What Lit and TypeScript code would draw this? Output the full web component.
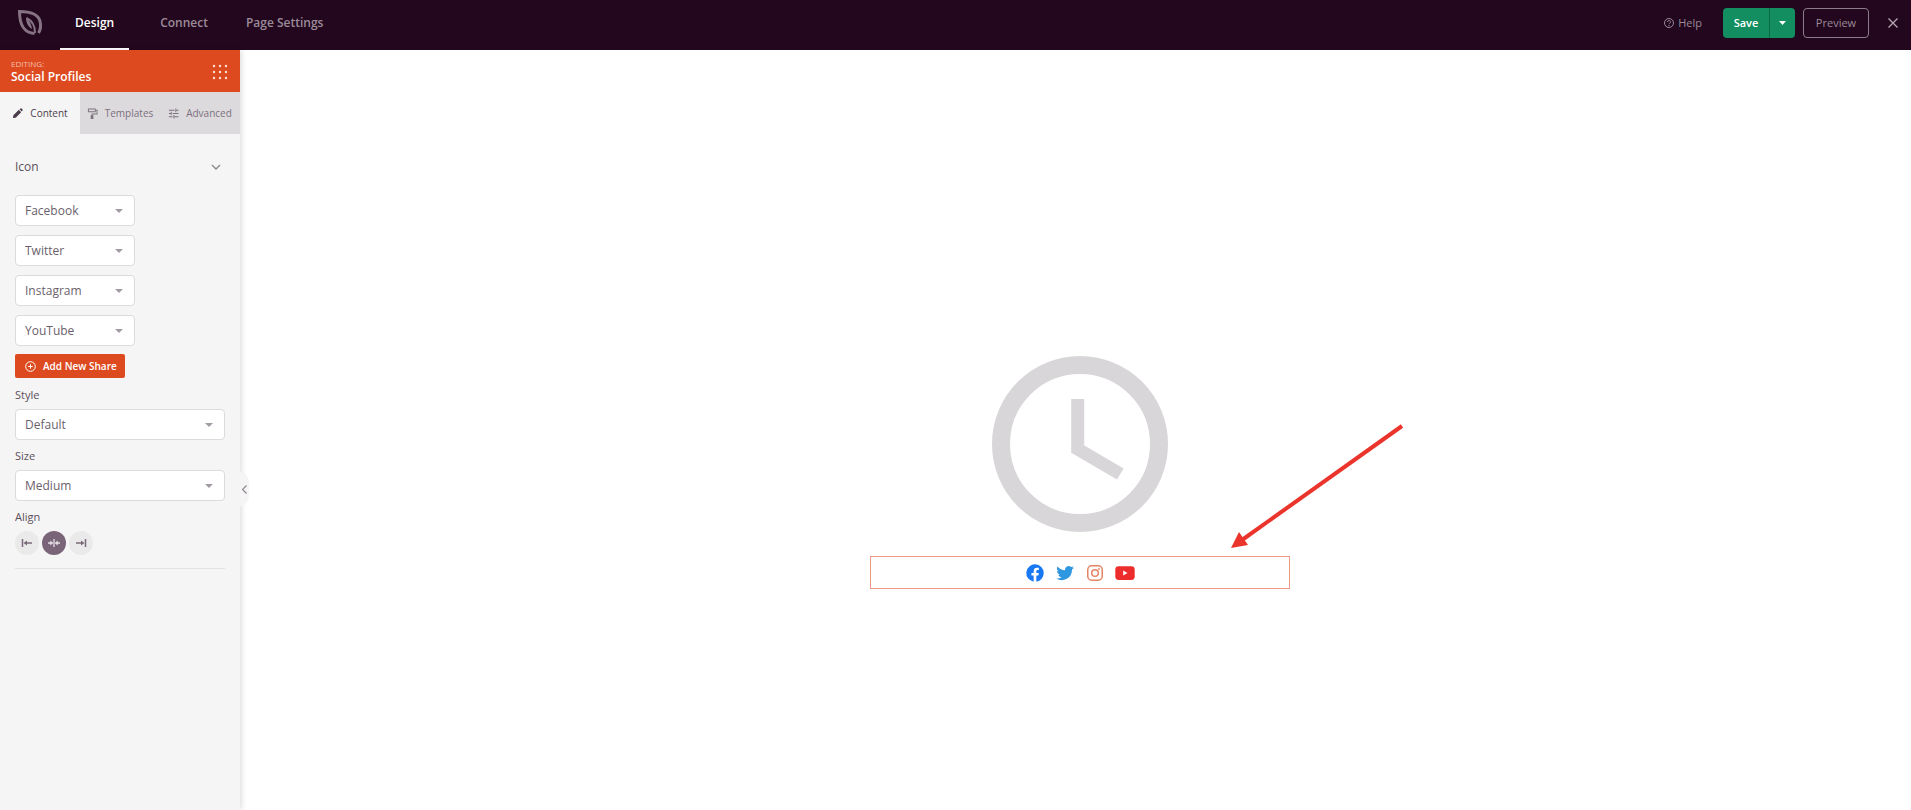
import { LitElement, html, css, svg } from "lit";
import { customElement, property, state } from "lit/decorators.js";

@customElement("picker-field")
class PickerField extends LitElement {
  @property() label = "";
  @property() value = "";
  @property({ type: Array }) options: string[] = [];
  @property({ type: Boolean, attribute: "hide-label" }) hideLabel = false;

  static styles = css`
    :host {
      display: block;
    }
    .label {
      display: block;
      font-size: 11px;
      line-height: 16px;
      margin-bottom: 6px;
      color: #5c4f5b;
    }
    .box {
      display: grid;
      align-items: center;
    }
    .select {
      grid-area: 1 / 1;
      appearance: none;
      width: 100%;
      height: 31px;
      margin: 0;
      padding: 0 28px 0 9px;
      border: 1px solid #dcdadc;
      border-radius: 4px;
      background: #fff;
      color: #6b5f6c;
      font: 12px "Open Sans", sans-serif;
    }
    .caret {
      grid-area: 1 / 1;
      justify-self: end;
      margin-right: 12px;
      width: 8px;
      height: 4px;
      fill: #a39ca5;
      pointer-events: none;
    }
  `;

  render() {
    return html`
      ${this.hideLabel ? "" : html`<label class="label" for="field">${this.label}</label>`}
      <div class="box">
        <select class="select" id="field" aria-label=${this.label}>
          ${this.options.map((o) => html`<option ?selected=${o === this.value}>${o}</option>`)}
        </select>
        <svg class="caret" viewBox="0 0 8 4" aria-hidden="true"><path d="M0 0h8L4 4z" /></svg>
      </div>
    `;
  }
}

const NETWORKS = ["Facebook", "Twitter", "Instagram", "YouTube"];

const alignIcons: Record<string, unknown> = {
  Left: svg`<path d="M1.500 1v8" stroke-width="1.500" /><path d="M5 5h6" stroke-width="1.500" /><path d="M2.500 5L6 2.500v5z" fill="currentColor" stroke="none" />`,
  Center: svg`<path d="M6 1v8M0 5h3M9 5h3" stroke-width="1.300" /><path d="M5.300 5L2.300 2.500v5zM6.700 5l3-2.500v5z" fill="currentColor" stroke="none" />`,
  Right: svg`<path d="M10.500 1v8" stroke-width="1.500" /><path d="M1 5h6" stroke-width="1.500" /><path d="M9.500 5L6 2.500v5z" fill="currentColor" stroke="none" />`,
};

@customElement("app-root")
class AppRoot extends LitElement {
  @state() private align = "Center";

  static styles = css`
    :host {
      display: flex;
      flex-direction: column;
      min-height: 100vh;
      background: #fff;
      font-family: "Open Sans", sans-serif;
      font-size: 12px;
      line-height: 16px;
      color: #5c4f5b;
    }
    * {
      box-sizing: border-box;
    }
    button {
      margin: 0;
      padding: 0;
      border: 0;
      background: none;
      font: inherit;
      color: inherit;
      cursor: pointer;
    }
    .topbar {
      display: flex;
      align-items: center;
      height: 50px;
      padding: 0 12px 0 16px;
      background: #23071e;
      color: #9b8b99;
    }
    .logo {
      display: block;
      width: 28px;
      height: 28px;
      margin-bottom: 4px;
    }
    .nav {
      display: flex;
      gap: 8px;
      align-self: stretch;
      margin-left: 16px;
    }
    .nav-link {
      display: flex;
      align-items: center;
      padding: 0 15px 2px;
      border-bottom: 2px solid transparent;
      color: inherit;
      font-weight: 600;
      text-decoration: none;
    }
    .nav-link.current {
      margin-right: 8px;
      border-color: #fff;
      color: #fff;
    }
    .actions {
      display: flex;
      align-items: center;
      margin: 0 0 4px auto;
      font-size: 11px;
    }
    .help {
      display: flex;
      align-items: center;
      gap: 4px;
      margin-right: 21px;
      color: inherit;
      text-decoration: none;
    }
    .help-icon {
      width: 10px;
      height: 10px;
    }
    .split {
      display: flex;
      height: 30px;
      margin-right: 8px;
      border-radius: 4px;
      background: #138e60;
      color: #fff;
    }
    .save {
      width: 47px;
      border-right: 1px solid #0b6b47;
      font-weight: 600;
    }
    .save-more {
      display: grid;
      place-items: center;
      width: 25px;
    }
    .save-caret {
      width: 7px;
      height: 4px;
      fill: #fff;
    }
    .preview {
      width: 66px;
      height: 30px;
      border: 1px solid #8a7c88;
      border-radius: 4px;
      font-weight: 500;
    }
    .close {
      display: grid;
      place-items: center;
      width: 12px;
      margin-left: 18px;
    }
    .close-icon {
      width: 10px;
      height: 10px;
      stroke: #b5a9b4;
    }
    .workspace {
      display: flex;
      flex: 1;
    }
    .sidebar {
      position: relative;
      flex: none;
      width: 240px;
      background: #f5f5f5;
      box-shadow: 2px 0 5px rgba(0, 0, 0, 0.12);
    }
    .editing {
      display: flex;
      align-items: center;
      justify-content: space-between;
      height: 42px;
      padding: 1px 12px 0 11px;
      background: #dd4a1f;
      color: #fff;
    }
    .eyebrow {
      font-size: 8px;
      line-height: 10px;
      text-transform: uppercase;
      color: #f6bfae;
    }
    .block-name {
      margin: 0;
      font-size: 12px;
      line-height: 16px;
      font-weight: 600;
    }
    .grid-icon {
      display: block;
      width: 16px;
      height: 16px;
      fill: #fbe0d8;
    }
    .tabs {
      display: grid;
      grid-template-columns: repeat(3, 1fr);
      height: 42px;
      background: #dcdadd;
      font-size: 10px;
      font-weight: 500;
      color: #7d717f;
    }
    .tab {
      display: flex;
      align-items: center;
      justify-content: center;
      gap: 7px;
    }
    .tab.current {
      background: #f5f5f5;
      color: #4c3d4c;
    }
    .tab-icon {
      width: 11px;
      height: 11px;
      fill: currentColor;
    }
    .panel {
      padding: 25px 15px;
    }
    .section {
      display: flex;
      align-items: center;
      justify-content: space-between;
      width: 100%;
      padding-right: 4px;
      font-weight: 500;
    }
    .chevron {
      width: 10px;
      height: 6px;
      stroke: #8e848e;
    }
    .networks {
      display: grid;
      gap: 9px;
      width: 120px;
      margin-top: 20px;
    }
    .add {
      display: flex;
      align-items: center;
      gap: 7px;
      height: 24px;
      margin: 8px 0 9px;
      padding: 0 8px 0 10px;
      border-radius: 2px;
      background: #dd4a1f;
      color: #fff;
      font-size: 10px;
      font-weight: 600;
    }
    .add-icon {
      width: 11px;
      height: 11px;
    }
    .fields {
      display: grid;
      gap: 8px;
    }
    .align-label {
      font-size: 11px;
      line-height: 16px;
    }
    .align {
      margin: 0;
      padding: 0 0 13px;
      border: 0;
      border-bottom: 1px solid #e4e2e4;
    }
    .align-row {
      display: flex;
      gap: 3px;
      margin-top: 6px;
    }
    .align-button {
      display: grid;
      place-items: center;
      width: 24px;
      height: 24px;
      border-radius: 50%;
      background: #ebeaeb;
      color: #7a6a79;
    }
    .align-button.current {
      background: #7a6478;
      color: #e6e0e6;
    }
    .align-icon {
      width: 12px;
      height: 10px;
      fill: none;
      stroke: currentColor;
    }
    .collapse {
      position: absolute;
      top: 421px;
      right: -9px;
      display: grid;
      place-items: center end;
      width: 24px;
      height: 36px;
      padding-right: 2px;
      border-radius: 0 12px 12px 0;
      background: #f5f5f5;
    }
    .collapse-icon {
      width: 5px;
      height: 9px;
      stroke: #8e848e;
    }
    .canvas {
      display: flex;
      flex: 1;
      align-items: center;
      justify-content: center;
      padding: 85px 0 0 9px;
    }
    .content {
      position: relative;
      display: flex;
      flex-direction: column;
      align-items: center;
      gap: 24px;
      width: 420px;
    }
    .clock {
      width: 176px;
      height: 176px;
      fill: none;
      stroke: #d8d6d8;
    }
    .profiles {
      display: flex;
      align-items: center;
      justify-content: center;
      gap: 10px;
      width: 100%;
      height: 33px;
      border: 1px solid #ee9a83;
    }
    .social {
      display: grid;
      place-items: center;
      width: 20px;
      height: 20px;
    }
    .social-icon {
      width: 20px;
      height: 20px;
    }
    .pointer {
      position: absolute;
      left: 360px;
      top: 68px;
      width: 174px;
      height: 126px;
    }
  `;

  private tabs() {
    return html`
      <div class="tabs" role="tablist">
        <button class="tab current" role="tab" aria-selected="true">
          <svg class="tab-icon" viewBox="0 0 24 24"><path d="M2 22l1-6L15 4l5 5L8 21zM16.500 2.500l2-1.500a2 2 0 0 1 2.500 0l2 2a2 2 0 0 1 0 2.500L21.500 7.500z" /></svg>
          Content
        </button>
        <button class="tab" role="tab" aria-selected="false">
          <svg class="tab-icon" viewBox="0 0 24 24"><path fill-rule="evenodd" d="M2 1h17v3h4v10H12v2h2v8H8v-8h2v-4h11V6h-2v3H2zM4 3v4h13V3z" /></svg>
          Templates
        </button>
        <button class="tab" role="tab" aria-selected="false">
          <svg class="tab-icon" viewBox="0 0 24 24"><path d="M2 4h12v2H2zM16 1h2v3h5v2h-5v3h-2zM2 11h4V8h2v8H6v-3H2zM10 11h13v2H10zM2 18h8v2H2zM12 15h2v3h9v2h-9v3h-2z" /></svg>
          Advanced
        </button>
      </div>
    `;
  }

  private socials() {
    return html`
      <div class="profiles">
        <a class="social" href="#facebook" aria-label="Facebook">
          <svg class="social-icon" viewBox="0 0 28 28"><path fill="#1877f2" d="M26.200 14A12.200 12.200 0 1 0 12.100 26.100v-8.600H9V14h3.100v-2.700c0-3.100 1.800-4.700 4.600-4.700 1.300 0 2.700.2 2.700.2v3h-1.500c-1.500 0-2 .9-2 1.900V14h3.400l-.5 3.500h-2.900v8.600A12.200 12.200 0 0 0 26.200 14z" /></svg>
        </a>
        <a class="social" href="#twitter" aria-label="Twitter">
          <svg class="social-icon" viewBox="0.700 1 22 22"><path fill="#2f96e0" d="M21.500 6.100c-.7.300-1.500.5-2.200.6.800-.5 1.400-1.300 1.700-2.200-.8.500-1.600.8-2.500 1a4 4 0 0 0-6.800 3.600C8.500 9 5.500 7.400 3.500 4.900a4 4 0 0 0 1.200 5.300c-.6 0-1.200-.2-1.800-.5v.1c0 1.900 1.400 3.500 3.200 3.900-.6.200-1.200.2-1.800.1.500 1.600 2 2.700 3.700 2.700A8 8 0 0 1 2 18.100a11.300 11.300 0 0 0 17.400-10c.8-.6 1.500-1.300 2.100-2z" /></svg>
        </a>
        <a class="social" href="#instagram" aria-label="Instagram">
          <svg class="social-icon" viewBox="0 0 20 20" fill="none" stroke="#e58464"><rect x="2.750" y="2.750" width="14.500" height="14.500" rx="4" stroke-width="1.500" /><circle cx="10" cy="10" r="3.300" stroke-width="1.500" /><circle cx="14" cy="6" r=".9" fill="#e58464" stroke="none" /></svg>
        </a>
        <a class="social" href="#youtube" aria-label="YouTube">
          <svg class="social-icon" viewBox="0 0 20 20"><rect x=".3" y="3.300" width="19.400" height="13.600" rx="3.400" fill="#ed2c2c" /><path fill="#fff" d="M8.200 7.600v5l4.300-2.500z" /></svg>
        </a>
      </div>
    `;
  }

  render() {
    return html`
      <header class="topbar">
        <svg class="logo" viewBox="0 0 28 28" role="img" aria-label="Logo" fill="none" stroke="#857383">
          <path d="M18.500 24.500C8 24 3.500 15 3.500 2.500C14 2.500 22 5 24 12C25 16 25 20 22.500 24" stroke-width="3" />
          <path d="M10 8.500c0 6 2.500 9.500 6 11.500-.500-4-2-8-6-11.500z" fill="#857383" stroke="none" />
          <path d="M10.500 9c6 3 8.500 7 8.500 15" stroke-width="2" />
        </svg>
        <nav class="nav">
          <a class="nav-link current" href="#design">Design</a>
          <a class="nav-link" href="#connect">Connect</a>
          <a class="nav-link" href="#settings">Page Settings</a>
        </nav>
        <div class="actions">
          <a class="help" href="#help">
            <svg class="help-icon" viewBox="0 0 10 10" fill="none" stroke="currentColor"><circle cx="5" cy="5" r="4.500" /><path d="M3.500 4a1.500 1.500 0 1 1 2.200 1.300Q5 5.600 5 6.200M5 7v1" /></svg>
            Help
          </a>
          <div class="split">
            <button class="save">Save</button>
            <button class="save-more" aria-label="More save options">
              <svg class="save-caret" viewBox="0 0 7 4"><path d="M0 0h7L3.500 4z" /></svg>
            </button>
          </div>
          <button class="preview">Preview</button>
          <button class="close" aria-label="Close">
            <svg class="close-icon" viewBox="0 0 10 10"><path d="M.5.5l9 9M9.500.5l-9 9" stroke-width="1.300" /></svg>
          </button>
        </div>
      </header>
      <div class="workspace">
        <aside class="sidebar">
          <div class="editing">
            <div>
              <div class="eyebrow">Editing:</div>
              <h1 class="block-name">Social Profiles</h1>
            </div>
            <button aria-label="All blocks">
              <svg class="grid-icon" viewBox="0 0 16 16">
                ${[2, 8, 14].map((y) => [2, 8, 14].map((x) => svg`<circle cx=${x} cy=${y} r="1.200" />`))}
              </svg>
            </button>
          </div>
          ${this.tabs()}
          <div class="panel">
            <button class="section" aria-expanded="true">
              Icon
              <svg class="chevron" viewBox="0 0 10 6" fill="none"><path d="M1 1l4 4 4-4" stroke-width="1.300" /></svg>
            </button>
            <div class="networks">
              ${NETWORKS.map(
                (n) => html`<picker-field hide-label label="Network" .value=${n} .options=${NETWORKS}></picker-field>`
              )}
            </div>
            <button class="add">
              <svg class="add-icon" viewBox="0 0 11 11" fill="none" stroke="#fff"><circle cx="5.500" cy="5.500" r="4.800" /><path d="M5.500 3.200v4.600M3.200 5.500h4.600" /></svg>
              Add New Share
            </button>
            <div class="fields">
              <picker-field label="Style" .value=${"Default"} .options=${["Default"]}></picker-field>
              <picker-field label="Size" .value=${"Medium"} .options=${["Small", "Medium", "Large"]}></picker-field>
              <div class="align" role="group" aria-labelledby="align-label">
                <div class="align-label" id="align-label">Align</div>
                <div class="align-row">
                  ${Object.keys(alignIcons).map(
                    (a) => html`<button
                      class="align-button ${a === this.align ? "current" : ""}"
                      aria-label=${a}
                      aria-pressed=${a === this.align}
                      @click=${() => (this.align = a)}
                    >
                      <svg class="align-icon" viewBox="0 0 12 10">${alignIcons[a]}</svg>
                    </button>`
                  )}
                </div>
              </div>
            </div>
          </div>
          <button class="collapse" aria-label="Collapse panel">
            <svg class="collapse-icon" viewBox="0 0 5 9" fill="none"><path d="M4.500.5l-4 4 4 4" stroke-width="1.200" /></svg>
          </button>
        </aside>
        <main class="canvas">
          <div class="content">
            <svg class="clock" viewBox="0 0 176 176" role="img" aria-label="Clock">
              <circle cx="88" cy="88" r="79" stroke-width="18" />
              <path d="M85.700 43v50l42.600 25" stroke-width="13" />
            </svg>
            ${this.socials()}
            <svg class="pointer" viewBox="0 0 174 126" aria-hidden="true">
              <path d="M172 2L12 116" stroke="#ea342c" stroke-width="4" />
              <path d="M1 124l8-16 9 13z" fill="#ea342c" />
            </svg>
          </div>
        </main>
      </div>
    `;
  }
}
